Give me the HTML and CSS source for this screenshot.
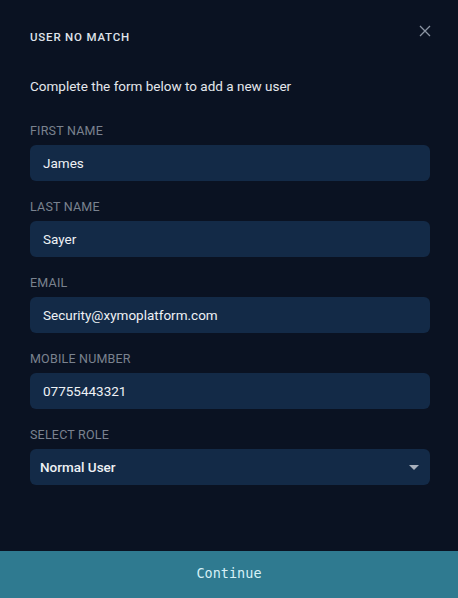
FILE: index.html
```html
<!DOCTYPE html>
<html>
<head>
<meta charset="utf-8">
<link rel="stylesheet" href="styles.css">
</head>
<body>
<div class="modal">
  <div class="content">
    <div class="header">
      <h1 class="title">USER NO MATCH</h1>
      <button class="close" aria-label="Close">
        <svg width="12" height="12" viewBox="0 0 12 12"><path d="M1 1L11 11M11 1L1 11" stroke="#8b94a3" stroke-width="1.3" fill="none"/></svg>
      </button>
    </div>
    <p class="intro">Complete the form below to add a new user</p>
    <div class="field">
      <label class="label">FIRST NAME</label>
      <div class="input">James</div>
    </div>
    <div class="field">
      <label class="label">LAST NAME</label>
      <div class="input">Sayer</div>
    </div>
    <div class="field">
      <label class="label">EMAIL</label>
      <div class="input">Security@xymoplatform.com</div>
    </div>
    <div class="field">
      <label class="label">MOBILE NUMBER</label>
      <div class="input">07755443321</div>
    </div>
    <div class="field">
      <label class="label">SELECT ROLE</label>
      <div class="input select"><span class="sel-text">Normal User</span><span class="caret"></span></div>
    </div>
  </div>
  <button class="continue">Continue</button>
</div>
</body>
</html>
```
FILE: styles.css
```css
* { box-sizing: border-box; }
html, body { margin: 0; padding: 0; }
body {
  background: #0a1222;
  font-family: Roboto, "Noto Sans", sans-serif;
  width: 458px;
  height: 598px;
  overflow: hidden;
}
.modal {
  height: 598px;
  display: flex;
  flex-direction: column;
  justify-content: space-between;
  background: #0a1222;
}
.content {
  padding: 0 28px 0 30px;
}
.header {
  display: flex;
  justify-content: space-between;
  align-items: flex-start;
  height: 77px;
}
.title {
  margin: 31px 0 0 0;
  font-size: 11.5px;
  font-weight: 500;
  letter-spacing: 0.8px;
  color: #dfe3ea;
  line-height: 13px;
}
.close {
  margin: 25px -1px 0 0;
  padding: 0;
  background: none;
  border: none;
  width: 12px;
  height: 12px;
  display: flex;
}
.intro {
  margin: 0 0 29px 0;
  font-size: 13.5px;
  color: #e4e7ec;
  line-height: 18px;
}
.field {
  margin-bottom: 19px;
}
.label {
  display: block;
  font-size: 12.5px;
  color: #7a828f;
  line-height: 14px;
  margin-bottom: 7px;
  letter-spacing: 0.2px;
}
.input {
  height: 36px;
  width: 400px;
  background: #132a47;
  border-radius: 6px;
  padding: 0 13px;
  display: flex;
  align-items: center;
  font-size: 13.5px;
  color: #eef1f5;
}
.select {
  padding: 0 10px;
  justify-content: space-between;
  font-weight: 500;
}
.caret {
  width: 0;
  height: 0;
  border-left: 5px solid transparent;
  border-right: 5px solid transparent;
  border-top: 5px solid #a8b0bd;
  margin-right: 1px;
}
.continue {
  height: 47px;
  width: 100%;
  background: #2f7a90;
  border: none;
  color: #d6f1f7;
  font-family: "DejaVu Sans Mono", monospace;
  font-size: 13.5px;
  padding: 0 0 3px 0;
}
```
